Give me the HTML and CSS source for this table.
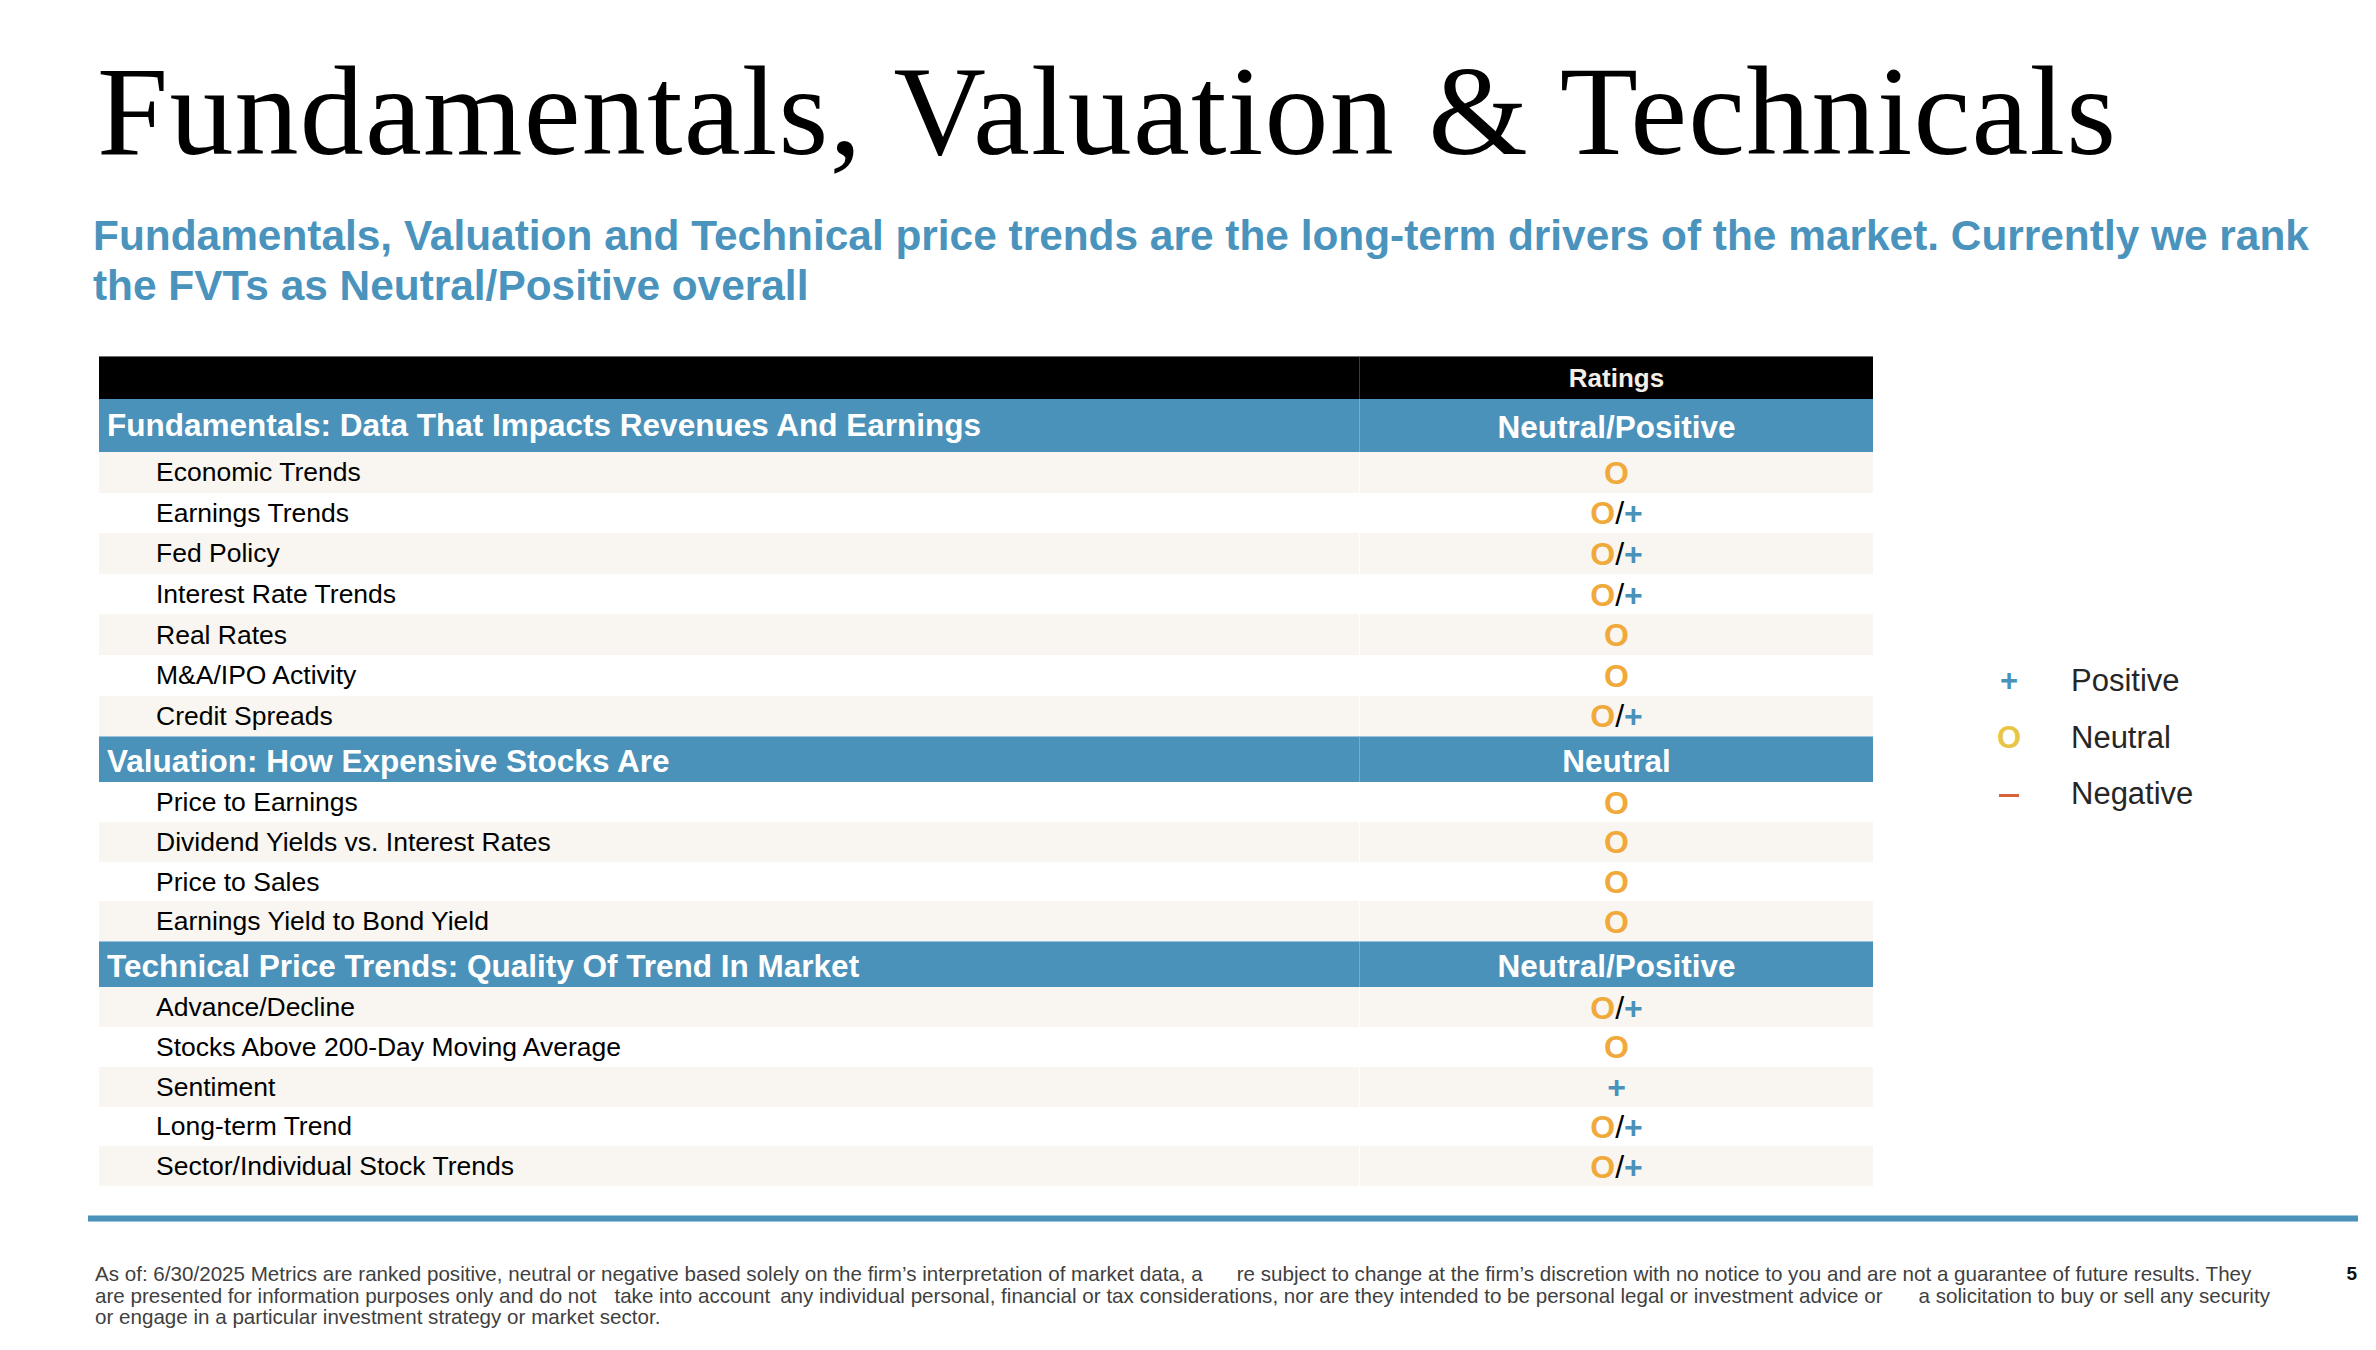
FILE: index.html
```html
<!DOCTYPE html>
<html lang="en">
<head>
<meta charset="utf-8">
<title>Fundamentals, Valuation &amp; Technicals</title>
<link rel="stylesheet" href="styles.css">
</head>
<body>
<div class="slide">
  <h1 class="title">Fundamentals, Valuation &amp; Technicals</h1>
  <p class="subtitle">Fundamentals, Valuation and Technical price trends are the long-term drivers of the market. Currently we rank<br>the FVTs as Neutral/Positive overall</p>

  <div class="content">
    <div class="fvt">
      <div class="row head"><div class="lab"></div><div class="rat">Ratings</div></div>

      <div class="row sect sect-fund"><div class="lab">Fundamentals: Data That Impacts Revenues And Earnings</div><div class="rat">Neutral/Positive</div></div>
      <div class="row item g1 alt"><div class="lab">Economic Trends</div><div class="rat"><span class="o">O</span></div></div>
      <div class="row item g1"><div class="lab">Earnings Trends</div><div class="rat"><span class="o">O</span><span class="sl">/</span><span class="p">+</span></div></div>
      <div class="row item g1 alt"><div class="lab">Fed Policy</div><div class="rat"><span class="o">O</span><span class="sl">/</span><span class="p">+</span></div></div>
      <div class="row item g1"><div class="lab">Interest Rate Trends</div><div class="rat"><span class="o">O</span><span class="sl">/</span><span class="p">+</span></div></div>
      <div class="row item g1 alt"><div class="lab">Real Rates</div><div class="rat"><span class="o">O</span></div></div>
      <div class="row item g1"><div class="lab">M&amp;A/IPO Activity</div><div class="rat"><span class="o">O</span></div></div>
      <div class="row item g1 alt"><div class="lab">Credit Spreads</div><div class="rat"><span class="o">O</span><span class="sl">/</span><span class="p">+</span></div></div>

      <div class="row sect"><div class="lab">Valuation: How Expensive Stocks Are</div><div class="rat">Neutral</div></div>
      <div class="row item g2"><div class="lab">Price to Earnings</div><div class="rat"><span class="o">O</span></div></div>
      <div class="row item g2 alt"><div class="lab">Dividend Yields vs. Interest Rates</div><div class="rat"><span class="o">O</span></div></div>
      <div class="row item g2"><div class="lab">Price to Sales</div><div class="rat"><span class="o">O</span></div></div>
      <div class="row item g2 alt"><div class="lab">Earnings Yield to Bond Yield</div><div class="rat"><span class="o">O</span></div></div>

      <div class="row sect"><div class="lab">Technical Price Trends: Quality Of Trend In Market</div><div class="rat">Neutral/Positive</div></div>
      <div class="row item g3 alt"><div class="lab">Advance/Decline</div><div class="rat"><span class="o">O</span><span class="sl">/</span><span class="p">+</span></div></div>
      <div class="row item g3"><div class="lab">Stocks Above 200-Day Moving Average</div><div class="rat"><span class="o">O</span></div></div>
      <div class="row item g3 alt"><div class="lab">Sentiment</div><div class="rat"><span class="p">+</span></div></div>
      <div class="row item g3"><div class="lab">Long-term Trend</div><div class="rat"><span class="o">O</span><span class="sl">/</span><span class="p">+</span></div></div>
      <div class="row item g3 alt"><div class="lab">Sector/Individual Stock Trends</div><div class="rat"><span class="o">O</span><span class="sl">/</span><span class="p">+</span></div></div>
    </div>

    <div class="legend">
      <span class="sym sym-pos">+</span><span class="ltxt">Positive</span>
      <span class="sym sym-neu">O</span><span class="ltxt">Neutral</span>
      <span class="sym"><span class="dash"></span></span><span class="ltxt">Negative</span>
    </div>
  </div>

  <div class="rule"></div>

  <div class="footer">
    <p class="disc">As of: 6/30/2025 Metrics are ranked positive, neutral or negative based solely on the firm’s interpretation of market data, a<span class="gap gap-a"></span>re subject to change at the firm’s discretion with no notice to you and are not a guarantee of future results. They<br>are presented for information purposes only and do not<span class="gap gap-b"></span>take into account<span class="gap gap-c"></span>any individual personal, financial or tax considerations, nor are they intended to be personal legal or investment advice or<span class="gap gap-d"></span>a solicitation to buy or sell any security<br>or engage in a particular investment strategy or market sector.</p>
    <span class="page">5</span>
  </div>
</div>
</body>
</html>
```

FILE: styles.css
```css
html, body {
  margin: 0;
  padding: 0;
  background: #ffffff;
}

body {
  font-family: "Liberation Sans", Arial, sans-serif;
  color: #000;
}

.slide {
  width: 2376px;
  height: 1350px;
  overflow: hidden;
  background: #ffffff;
}

.title {
  margin: 0;
  padding: 47px 0 0 97px;
  font-family: "Liberation Serif", "Times New Roman", serif;
  font-weight: normal;
  font-size: 128px;
  letter-spacing: 1.2px;
  line-height: 1;
  color: #000;
  white-space: nowrap;
}

.subtitle {
  margin: 36px 0 0 0;
  padding-left: 93px;
  font-weight: bold;
  font-size: 42.4px;
  line-height: 50px;
  color: #4a93bd;
  white-space: nowrap;
}

.content {
  display: flex;
  align-items: flex-start;
  margin-top: 45px;
  padding-left: 99px;
}

.fvt {
  width: 1774px;
  flex: none;
}

.row {
  display: grid;
  grid-template-columns: 1260px 514px;
}

.row .lab,
.row .rat {
  display: flex;
  align-items: center;
  box-sizing: border-box;
}

.row .rat {
  justify-content: center;
  border-left: 1px solid #ffffff;
}

/* black header */
.head {
  height: 43px;
  background: #000;
  border-top: 1px solid #6f6f6f;
  box-sizing: border-box;
}

.head .rat {
  border-left-color: #3c3c3c;
  color: #f3efe8;
  font-weight: bold;
  font-size: 26px;
  padding-top: 1px;
}

/* section rows */
.sect {
  height: 46px;
  background: #4a92ba;
  border-top: 1px solid #9cc3dc;
  box-sizing: border-box;
  color: #ffffff;
  font-weight: bold;
  font-size: 31.5px;
}

.sect-fund {
  height: 53px;
  border-top: none;
}

.sect .lab {
  padding-left: 8px;
  padding-top: 3px;
}

.sect .rat {
  border-left-color: #78acd0;
  padding-top: 4px;
}

.sect-fund .lab {
  padding-top: 0;
}

.sect-fund .rat {
  padding-top: 3px;
}

/* item rows */
.item {
  background: #ffffff;
  font-size: 26.5px;
}

.item.alt {
  background: #f9f6f1;
}

.g1 { height: 40.6px; }
.g2 { height: 39.75px; }
.g3 { height: 39.8px; }

.item .lab {
  padding-left: 57px;
  padding-top: 1px;
  color: #000;
}

.item .rat {
  font-weight: bold;
  font-size: 32px;
  padding-top: 2px;
}

.o {
  color: #f0a93b;
}

.p {
  color: #4a92ba;
}

.sl {
  color: #000;
  font-weight: normal;
}

/* legend */
.legend {
  display: grid;
  grid-template-columns: 24px auto;
  column-gap: 50px;
  margin-left: 124px;
  margin-top: 297px;
  font-size: 31px;
  line-height: 56.5px;
  color: #262626;
}

.sym {
  text-align: center;
  font-weight: bold;
  font-size: 31px;
}

.sym-pos {
  color: #4a92ba;
}

.sym-neu {
  color: #e8c545;
}

.dash {
  display: inline-block;
  width: 20px;
  height: 3px;
  background: #d8623a;
  vertical-align: baseline;
  margin-bottom: 7px;
}

/* footer */
.rule {
  margin: 29px 0 0 88px;
  width: 2270px;
  height: 5px;
  background: #4a92ba;
  border-top: 1px solid #9cc6e0;
  border-bottom: 1px solid #9cc6e0;
}

.footer {
  display: flex;
  justify-content: space-between;
  align-items: flex-start;
  margin-top: 41px;
  padding: 0 19px 0 95px;
}

.disc {
  margin: 0;
  font-size: 20.6px;
  line-height: 21.5px;
  color: #3f3f3f;
  white-space: nowrap;
}

.gap {
  display: inline-block;
}

.gap-a { width: 34px; }
.gap-b { width: 18px; }
.gap-c { width: 10px; }
.gap-d { width: 36px; }

.page {
  font-weight: bold;
  font-size: 19px;
  line-height: 21.5px;
  color: #111;
}
```
